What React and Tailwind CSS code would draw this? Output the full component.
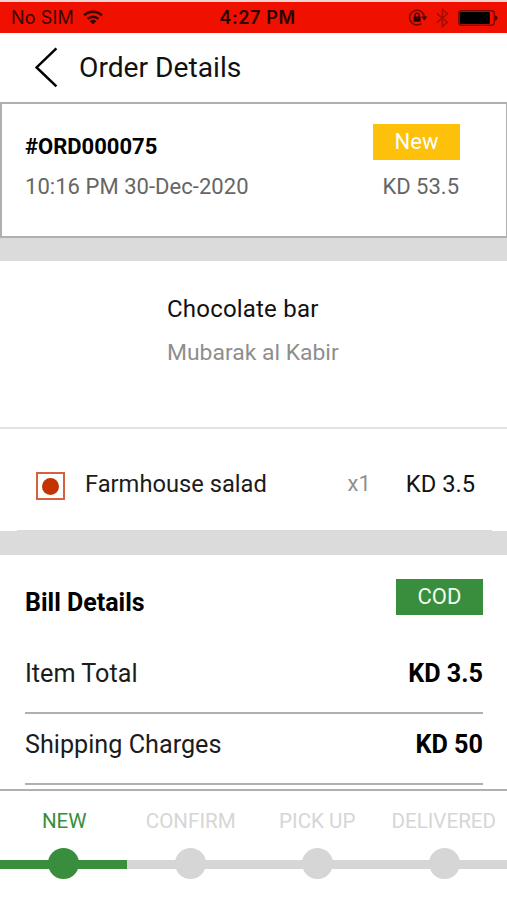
function WifiIcon() {
  return (
    <svg className="ml-[9px] h-[16px] w-[20px]" viewBox="0 0 20 16" fill="none" stroke="#3a0400" strokeWidth="2.4">
      <path d="M1.2 5.4A12.6 12.6 0 0 1 18.8 5.4" />
      <path d="M4.6 8.9A7.8 7.8 0 0 1 15.4 8.9" />
      <path d="M10 14.6L6.7 11.2A4.7 4.7 0 0 1 13.3 11.2Z" fill="#3a0400" stroke="none" />
    </svg>
  );
}

function RotationLockIcon() {
  return (
    <svg className="h-[18px] w-[20px]" viewBox="0 0 20 18" fill="none">
      <path d="M13.6 14.4A7.4 7.4 0 1 1 16.4 8.2" stroke="#6a0a04" strokeWidth="1.5" />
      <path d="M13.2 7.6H19.4L16.3 11.4Z" fill="#3a0400" />
      <rect x="5.6" y="7.6" width="7" height="5.2" rx="0.6" fill="#2a0300" />
      <path d="M7.1 8V6.1A2 2 0 0 1 11.1 6.1V8" stroke="#2a0300" strokeWidth="1.3" />
    </svg>
  );
}

function BluetoothIcon() {
  return (
    <svg className="h-[20px] w-[13px]" viewBox="0 0 13 20" fill="none" stroke="#a30d06" strokeWidth="1.5">
      <path d="M0.8 5.4L11.4 14.2L6.4 18.4V1.6L11.4 5.8L0.8 14.6" />
    </svg>
  );
}

function BatteryIcon() {
  return (
    <svg className="h-[16px] w-[40px]" viewBox="0 0 40 16">
      <rect x="0.8" y="0.8" width="35.4" height="14.4" rx="2.6" fill="none" stroke="#7a0a04" strokeWidth="1.4" />
      <rect x="1.8" y="2" width="30" height="12" rx="1" fill="#000" />
      <path d="M37.2 5.2Q39.6 6.2 39.6 8T37.2 10.8Z" fill="#3a0400" />
    </svg>
  );
}

const bill = [
  { label: "Item Total", value: "KD 3.5" },
  { label: "Shipping Charges", value: "KD 50" },
];

const steps = [
  { label: "NEW", active: true },
  { label: "CONFIRM", active: false },
  { label: "PICK UP", active: false },
  { label: "DELIVERED", active: false },
];

export default function App() {
  return (
    <div className="flex h-[900px] w-[507px] flex-col overflow-hidden whitespace-nowrap bg-white font-['Roboto',sans-serif] text-black">
      <div className="grid h-[33px] shrink-0 grid-cols-[1fr_auto_1fr] items-center border-t-2 border-[#f3d3d0] bg-[#f01000] pt-px font-['Inter',sans-serif]">
        <div className="flex items-center pl-[11px]">
          <span className="text-[18px] leading-[20px] tracking-[0.15px] text-[#3a0400]">No SIM</span>
          <WifiIcon />
        </div>
        <span className="pl-[8px] text-[18px] font-semibold leading-[20px] tracking-[0.6px] text-[#2a0300]">4:27 PM</span>
        <div className="flex items-center justify-end pr-[9px]">
          <RotationLockIcon />
          <span className="w-[8px]" />
          <BluetoothIcon />
          <span className="w-[9px]" />
          <BatteryIcon />
        </div>
      </div>

      <header className="flex h-[69px] shrink-0 items-center pl-[34px]">
        <svg className="h-[42px] w-[24px]" viewBox="0 0 24 42" fill="none" stroke="#000" strokeWidth="2.5">
          <path d="M22.4 1.4L2.6 20.4L22.4 39.4" />
        </svg>
        <h1 className="ml-[21px] text-[28.2px] leading-[32px] text-[#111]">Order Details</h1>
      </header>

      <section className="flex h-[136px] shrink-0 justify-between border-2 border-r border-[#b0b0b0] pl-[23px] pr-[46px]">
        <div className="flex flex-col pt-[28px]">
          <span className="text-[22px] font-bold leading-[30px]">#ORD000075</span>
          <span className="mt-[10px] text-[22px] leading-[30px] tracking-[0.04px] text-[#666]">10:16 PM 30-Dec-2020</span>
        </div>
        <div className="flex flex-col items-end pt-[20px]">
          <span className="h-[36px] w-[87px] bg-[#fdc10b] text-center text-[22px] leading-[36px] text-white">New</span>
          <span className="mt-[12px] pr-px text-[22px] leading-[30px] text-[#666]">KD 53.5</span>
        </div>
      </section>
      <div className="h-[23px] shrink-0 bg-[#dbdbdb]" />

      <section className="flex h-[168px] shrink-0 flex-col border-b-2 border-[#e2e2e2] pl-[167px] pt-[33px]">
        <span className="text-[24px] leading-[30px] tracking-[0.2px] text-[#111]">Chocolate bar</span>
        <span className="mt-[14px] text-[22.9px] leading-[30px] text-[#8e8e8e]">Mubarak al Kabir</span>
      </section>

      <section className="flex h-[101px] shrink-0 pl-[36px] pr-[32px] pt-[40px]">
        <div className="mt-[3px] flex h-[28px] w-[29px] items-center justify-center border-2 border-[#d4623f]">
          <span className="h-[17px] w-[17px] rounded-full bg-[#c43302]" />
        </div>
        <span className="ml-[20px] text-[23.7px] leading-[30px] text-[#1c1c1c]">Farmhouse salad</span>
        <span className="ml-auto text-[22px] leading-[30px] text-[#909090]">x1</span>
        <span className="ml-[35px] text-[23.7px] leading-[30px] text-[#111]">KD 3.5</span>
      </section>
      <div className="ml-[17px] mr-[15px] h-px shrink-0 bg-[#dbdbdb]" />
      <div className="h-[24px] shrink-0 bg-[#dbdbdb]" />

      <section className="flex h-[234px] shrink-0 flex-col pl-[25px] pr-[24px]">
        <div className="flex h-[83px] justify-between pt-[24px]">
          <h2 className="mt-[8px] text-[25px] font-bold leading-[31px]">Bill Details</h2>
          <span className="h-[36px] w-[87px] bg-[#388e3c] text-center text-[22px] leading-[36px] text-[#f0faf0]">COD</span>
        </div>
        <div className="flex flex-col pt-[5px]">
          {bill.map((row) => (
            <div key={row.label} className="flex h-[71px] justify-between border-b-2 border-[#b0b0b0] pt-[11px] text-[25.2px] leading-[40px]">
              <span className="text-[#1c1c1c]">{row.label}</span>
              <span className="font-bold">{row.value}</span>
            </div>
          ))}
        </div>
      </section>

      <footer className="flex h-[111px] shrink-0 flex-col border-t-2 border-[#b0b0b0] bg-white">
        <div className="grid grid-cols-4 pl-px pt-[15px] text-center text-[20.6px] leading-[30px]">
          {steps.map((step) => (
            <div key={step.label} className={step.active ? "flex justify-center text-[#388e3c]" : "flex justify-center text-[#d6d6d6]"}>
              {step.label}
            </div>
          ))}
        </div>
        <div className="mt-[11px] grid h-[32px] grid-cols-4">
          {steps.map((step) => (
            <div key={step.label} className="grid place-items-center">
              <span className={step.active ? "col-start-1 row-start-1 mt-[3px] h-[9px] w-full bg-[#388e3c]" : "col-start-1 row-start-1 mt-[3px] h-[9px] w-full bg-[#d6d6d6]"} />
              <span className={step.active ? "col-start-1 row-start-1 ml-px h-[31px] w-[31px] rounded-full bg-[#388e3c]" : "col-start-1 row-start-1 ml-px h-[31px] w-[31px] rounded-full bg-[#d6d6d6]"} />
            </div>
          ))}
        </div>
      </footer>
    </div>
  );
}
